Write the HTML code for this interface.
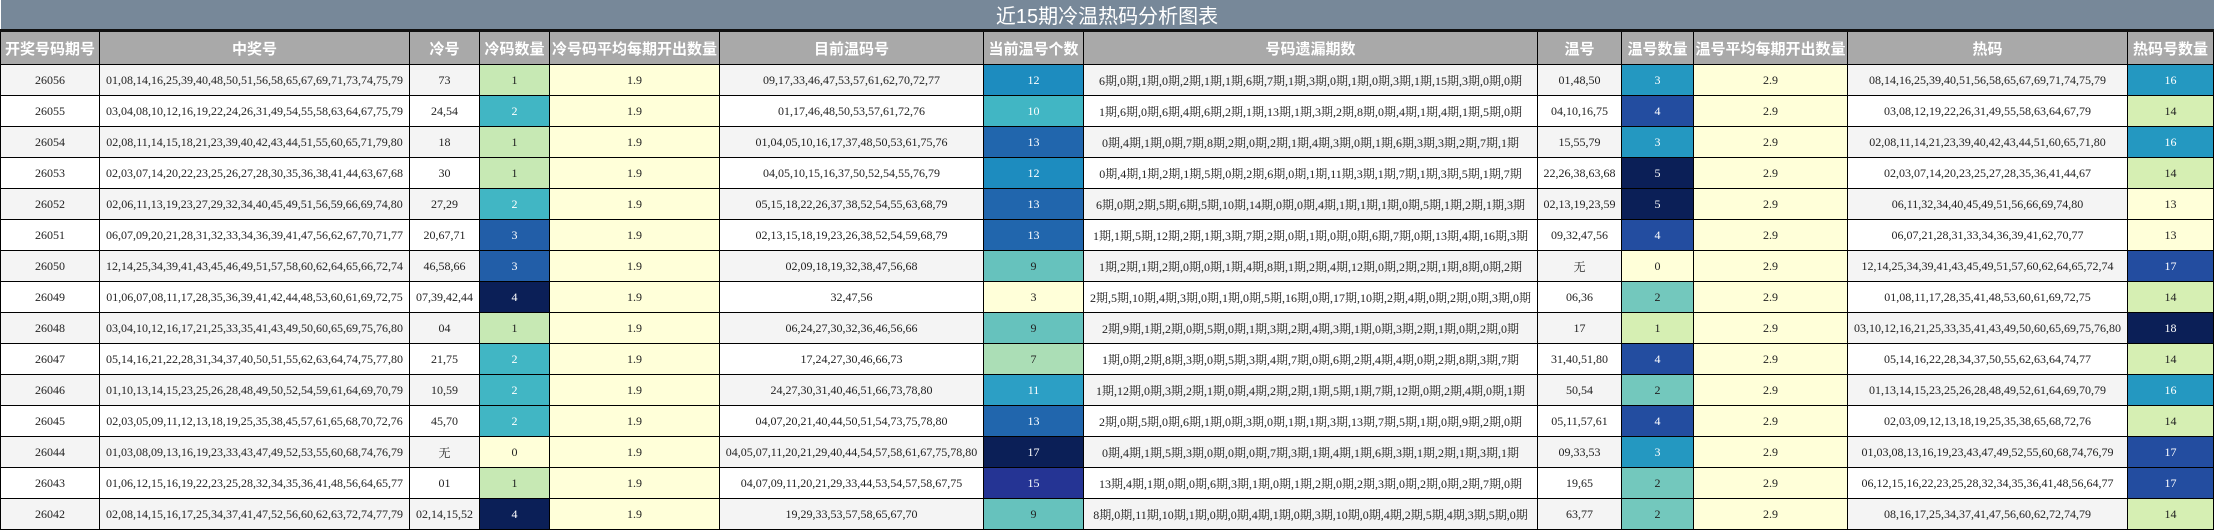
<!DOCTYPE html>
<html><head><meta charset="utf-8">
<style>
html,body{margin:0;padding:0;background:#fff;width:2214px;height:530px;overflow:hidden}
table{border-collapse:collapse;table-layout:fixed;width:2214px;font-family:"Liberation Serif","Noto Serif CJK SC",serif;font-size:12px;color:#222}
td,th{border:1px solid #000;text-align:center;padding:0;white-space:nowrap;overflow:hidden}
.title td{background:#778899;color:#fff;height:28px;font-family:"Liberation Sans","Noto Sans CJK SC",sans-serif;font-size:20px;border-bottom:3px solid #111;border-top:none;border-left:none;border-right:none}
th{background:#a9a9a9;color:#fff;height:32px;font-family:"Liberation Sans","Noto Sans CJK SC",sans-serif;font-size:15px;font-weight:bold}
tr.d td{height:30px}
tr.d:nth-child(odd) td{background:#f4f4f4}
tr.d:nth-child(even) td{background:#fff}
tr.d td.y{background:#ffffd9}
tr.d td.c0{background:#ffffd9}
tr.d td.c1{background:#c7e9b4}
tr.d td.c2{background:#41b6c4;color:#fff}
tr.d td.c3{background:#225ea8;color:#fff}
tr.d td.c4{background:#0b1f57;color:#fff}
tr.d td.w3{background:#ffffd9}
tr.d td.w7{background:#abdeb6}
tr.d td.w9{background:#66c2bd}
tr.d td.w10{background:#41b6c4;color:#fff}
tr.d td.w11{background:#2c9fc5;color:#fff}
tr.d td.w12{background:#1d8cbf;color:#fff}
tr.d td.w13{background:#2166ad;color:#fff}
tr.d td.w15{background:#253494;color:#fff}
tr.d td.w17{background:#0b1f57;color:#fff}
tr.d td.t0{background:#ffffd9}
tr.d td.t1{background:#d6efb3}
tr.d td.t2{background:#73c8bd}
tr.d td.t3{background:#2498c1;color:#fff}
tr.d td.t4{background:#234da0;color:#fff}
tr.d td.t5{background:#0b1f57;color:#fff}
tr.d td.h13{background:#ffffd9}
tr.d td.h14{background:#d6efb3}
tr.d td.h16{background:#2498c1;color:#fff}
tr.d td.h17{background:#234da0;color:#fff}
tr.d td.h18{background:#0b1f57;color:#fff}
</style></head><body>
<table>
<colgroup><col style="width:99px"><col style="width:310px"><col style="width:70px"><col style="width:70px"><col style="width:170px"><col style="width:264px"><col style="width:100px"><col style="width:454px"><col style="width:84px"><col style="width:72px"><col style="width:154px"><col style="width:280px"><col style="width:86px"></colgroup>
<tr class="title"><td colspan="13">近15期冷温热码分析图表</td></tr>
<tr><th>开奖号码期号</th><th>中奖号</th><th>冷号</th><th>冷码数量</th><th>冷号码平均每期开出数量</th><th>目前温码号</th><th>当前温号个数</th><th>号码遗漏期数</th><th>温号</th><th>温号数量</th><th>温号平均每期开出数量</th><th>热码</th><th>热码号数量</th></tr>
<tr class="d"><td>26056</td><td>01,08,14,16,25,39,40,48,50,51,56,58,65,67,69,71,73,74,75,79</td><td>73</td><td class="c1">1</td><td class="y">1.9</td><td>09,17,33,46,47,53,57,61,62,70,72,77</td><td class="w12">12</td><td>6期,0期,1期,0期,2期,1期,1期,6期,7期,1期,3期,0期,1期,0期,3期,1期,15期,3期,0期,0期</td><td>01,48,50</td><td class="t3">3</td><td class="y">2.9</td><td>08,14,16,25,39,40,51,56,58,65,67,69,71,74,75,79</td><td class="h16">16</td></tr>
<tr class="d"><td>26055</td><td>03,04,08,10,12,16,19,22,24,26,31,49,54,55,58,63,64,67,75,79</td><td>24,54</td><td class="c2">2</td><td class="y">1.9</td><td>01,17,46,48,50,53,57,61,72,76</td><td class="w10">10</td><td>1期,6期,0期,6期,4期,6期,2期,1期,13期,1期,3期,2期,8期,0期,4期,1期,4期,1期,5期,0期</td><td>04,10,16,75</td><td class="t4">4</td><td class="y">2.9</td><td>03,08,12,19,22,26,31,49,55,58,63,64,67,79</td><td class="h14">14</td></tr>
<tr class="d"><td>26054</td><td>02,08,11,14,15,18,21,23,39,40,42,43,44,51,55,60,65,71,79,80</td><td>18</td><td class="c1">1</td><td class="y">1.9</td><td>01,04,05,10,16,17,37,48,50,53,61,75,76</td><td class="w13">13</td><td>0期,4期,1期,0期,7期,8期,2期,0期,2期,1期,4期,3期,0期,1期,6期,3期,3期,2期,7期,1期</td><td>15,55,79</td><td class="t3">3</td><td class="y">2.9</td><td>02,08,11,14,21,23,39,40,42,43,44,51,60,65,71,80</td><td class="h16">16</td></tr>
<tr class="d"><td>26053</td><td>02,03,07,14,20,22,23,25,26,27,28,30,35,36,38,41,44,63,67,68</td><td>30</td><td class="c1">1</td><td class="y">1.9</td><td>04,05,10,15,16,37,50,52,54,55,76,79</td><td class="w12">12</td><td>0期,4期,1期,2期,1期,5期,0期,2期,6期,0期,1期,11期,3期,1期,7期,1期,3期,5期,1期,7期</td><td>22,26,38,63,68</td><td class="t5">5</td><td class="y">2.9</td><td>02,03,07,14,20,23,25,27,28,35,36,41,44,67</td><td class="h14">14</td></tr>
<tr class="d"><td>26052</td><td>02,06,11,13,19,23,27,29,32,34,40,45,49,51,56,59,66,69,74,80</td><td>27,29</td><td class="c2">2</td><td class="y">1.9</td><td>05,15,18,22,26,37,38,52,54,55,63,68,79</td><td class="w13">13</td><td>6期,0期,2期,5期,6期,5期,10期,14期,0期,0期,4期,1期,1期,1期,0期,5期,1期,2期,1期,3期</td><td>02,13,19,23,59</td><td class="t5">5</td><td class="y">2.9</td><td>06,11,32,34,40,45,49,51,56,66,69,74,80</td><td class="h13">13</td></tr>
<tr class="d"><td>26051</td><td>06,07,09,20,21,28,31,32,33,34,36,39,41,47,56,62,67,70,71,77</td><td>20,67,71</td><td class="c3">3</td><td class="y">1.9</td><td>02,13,15,18,19,23,26,38,52,54,59,68,79</td><td class="w13">13</td><td>1期,1期,5期,12期,2期,1期,3期,7期,2期,0期,1期,0期,0期,6期,7期,0期,13期,4期,16期,3期</td><td>09,32,47,56</td><td class="t4">4</td><td class="y">2.9</td><td>06,07,21,28,31,33,34,36,39,41,62,70,77</td><td class="h13">13</td></tr>
<tr class="d"><td>26050</td><td>12,14,25,34,39,41,43,45,46,49,51,57,58,60,62,64,65,66,72,74</td><td>46,58,66</td><td class="c3">3</td><td class="y">1.9</td><td>02,09,18,19,32,38,47,56,68</td><td class="w9">9</td><td>1期,2期,1期,2期,0期,0期,1期,4期,8期,1期,2期,4期,12期,0期,2期,2期,1期,8期,0期,2期</td><td>无</td><td class="t0">0</td><td class="y">2.9</td><td>12,14,25,34,39,41,43,45,49,51,57,60,62,64,65,72,74</td><td class="h17">17</td></tr>
<tr class="d"><td>26049</td><td>01,06,07,08,11,17,28,35,36,39,41,42,44,48,53,60,61,69,72,75</td><td>07,39,42,44</td><td class="c4">4</td><td class="y">1.9</td><td>32,47,56</td><td class="w3">3</td><td>2期,5期,10期,4期,3期,0期,1期,0期,5期,16期,0期,17期,10期,2期,4期,0期,2期,0期,3期,0期</td><td>06,36</td><td class="t2">2</td><td class="y">2.9</td><td>01,08,11,17,28,35,41,48,53,60,61,69,72,75</td><td class="h14">14</td></tr>
<tr class="d"><td>26048</td><td>03,04,10,12,16,17,21,25,33,35,41,43,49,50,60,65,69,75,76,80</td><td>04</td><td class="c1">1</td><td class="y">1.9</td><td>06,24,27,30,32,36,46,56,66</td><td class="w9">9</td><td>2期,9期,1期,2期,0期,5期,0期,1期,3期,2期,4期,3期,1期,0期,3期,2期,1期,0期,2期,0期</td><td>17</td><td class="t1">1</td><td class="y">2.9</td><td>03,10,12,16,21,25,33,35,41,43,49,50,60,65,69,75,76,80</td><td class="h18">18</td></tr>
<tr class="d"><td>26047</td><td>05,14,16,21,22,28,31,34,37,40,50,51,55,62,63,64,74,75,77,80</td><td>21,75</td><td class="c2">2</td><td class="y">1.9</td><td>17,24,27,30,46,66,73</td><td class="w7">7</td><td>1期,0期,2期,8期,3期,0期,5期,3期,4期,7期,0期,6期,2期,4期,4期,0期,2期,8期,3期,7期</td><td>31,40,51,80</td><td class="t4">4</td><td class="y">2.9</td><td>05,14,16,22,28,34,37,50,55,62,63,64,74,77</td><td class="h14">14</td></tr>
<tr class="d"><td>26046</td><td>01,10,13,14,15,23,25,26,28,48,49,50,52,54,59,61,64,69,70,79</td><td>10,59</td><td class="c2">2</td><td class="y">1.9</td><td>24,27,30,31,40,46,51,66,73,78,80</td><td class="w11">11</td><td>1期,12期,0期,3期,2期,1期,0期,4期,2期,2期,1期,5期,1期,7期,12期,0期,2期,4期,0期,1期</td><td>50,54</td><td class="t2">2</td><td class="y">2.9</td><td>01,13,14,15,23,25,26,28,48,49,52,61,64,69,70,79</td><td class="h16">16</td></tr>
<tr class="d"><td>26045</td><td>02,03,05,09,11,12,13,18,19,25,35,38,45,57,61,65,68,70,72,76</td><td>45,70</td><td class="c2">2</td><td class="y">1.9</td><td>04,07,20,21,40,44,50,51,54,73,75,78,80</td><td class="w13">13</td><td>2期,0期,5期,0期,6期,1期,0期,3期,0期,1期,1期,3期,13期,7期,5期,1期,0期,9期,2期,0期</td><td>05,11,57,61</td><td class="t4">4</td><td class="y">2.9</td><td>02,03,09,12,13,18,19,25,35,38,65,68,72,76</td><td class="h14">14</td></tr>
<tr class="d"><td>26044</td><td>01,03,08,09,13,16,19,23,33,43,47,49,52,53,55,60,68,74,76,79</td><td>无</td><td class="c0">0</td><td class="y">1.9</td><td>04,05,07,11,20,21,29,40,44,54,57,58,61,67,75,78,80</td><td class="w17">17</td><td>0期,4期,1期,5期,3期,0期,0期,0期,7期,3期,1期,4期,1期,6期,3期,1期,2期,1期,3期,1期</td><td>09,33,53</td><td class="t3">3</td><td class="y">2.9</td><td>01,03,08,13,16,19,23,43,47,49,52,55,60,68,74,76,79</td><td class="h17">17</td></tr>
<tr class="d"><td>26043</td><td>01,06,12,15,16,19,22,23,25,28,32,34,35,36,41,48,56,64,65,77</td><td>01</td><td class="c1">1</td><td class="y">1.9</td><td>04,07,09,11,20,21,29,33,44,53,54,57,58,67,75</td><td class="w15">15</td><td>13期,4期,1期,0期,0期,6期,3期,1期,0期,1期,2期,0期,2期,3期,0期,2期,0期,2期,7期,0期</td><td>19,65</td><td class="t2">2</td><td class="y">2.9</td><td>06,12,15,16,22,23,25,28,32,34,35,36,41,48,56,64,77</td><td class="h17">17</td></tr>
<tr class="d"><td>26042</td><td>02,08,14,15,16,17,25,34,37,41,47,52,56,60,62,63,72,74,77,79</td><td>02,14,15,52</td><td class="c4">4</td><td class="y">1.9</td><td>19,29,33,53,57,58,65,67,70</td><td class="w9">9</td><td>8期,0期,11期,10期,1期,0期,0期,4期,1期,0期,3期,10期,0期,4期,2期,5期,4期,3期,5期,0期</td><td>63,77</td><td class="t2">2</td><td class="y">2.9</td><td>08,16,17,25,34,37,41,47,56,60,62,72,74,79</td><td class="h14">14</td></tr>
</table>
</body></html>
